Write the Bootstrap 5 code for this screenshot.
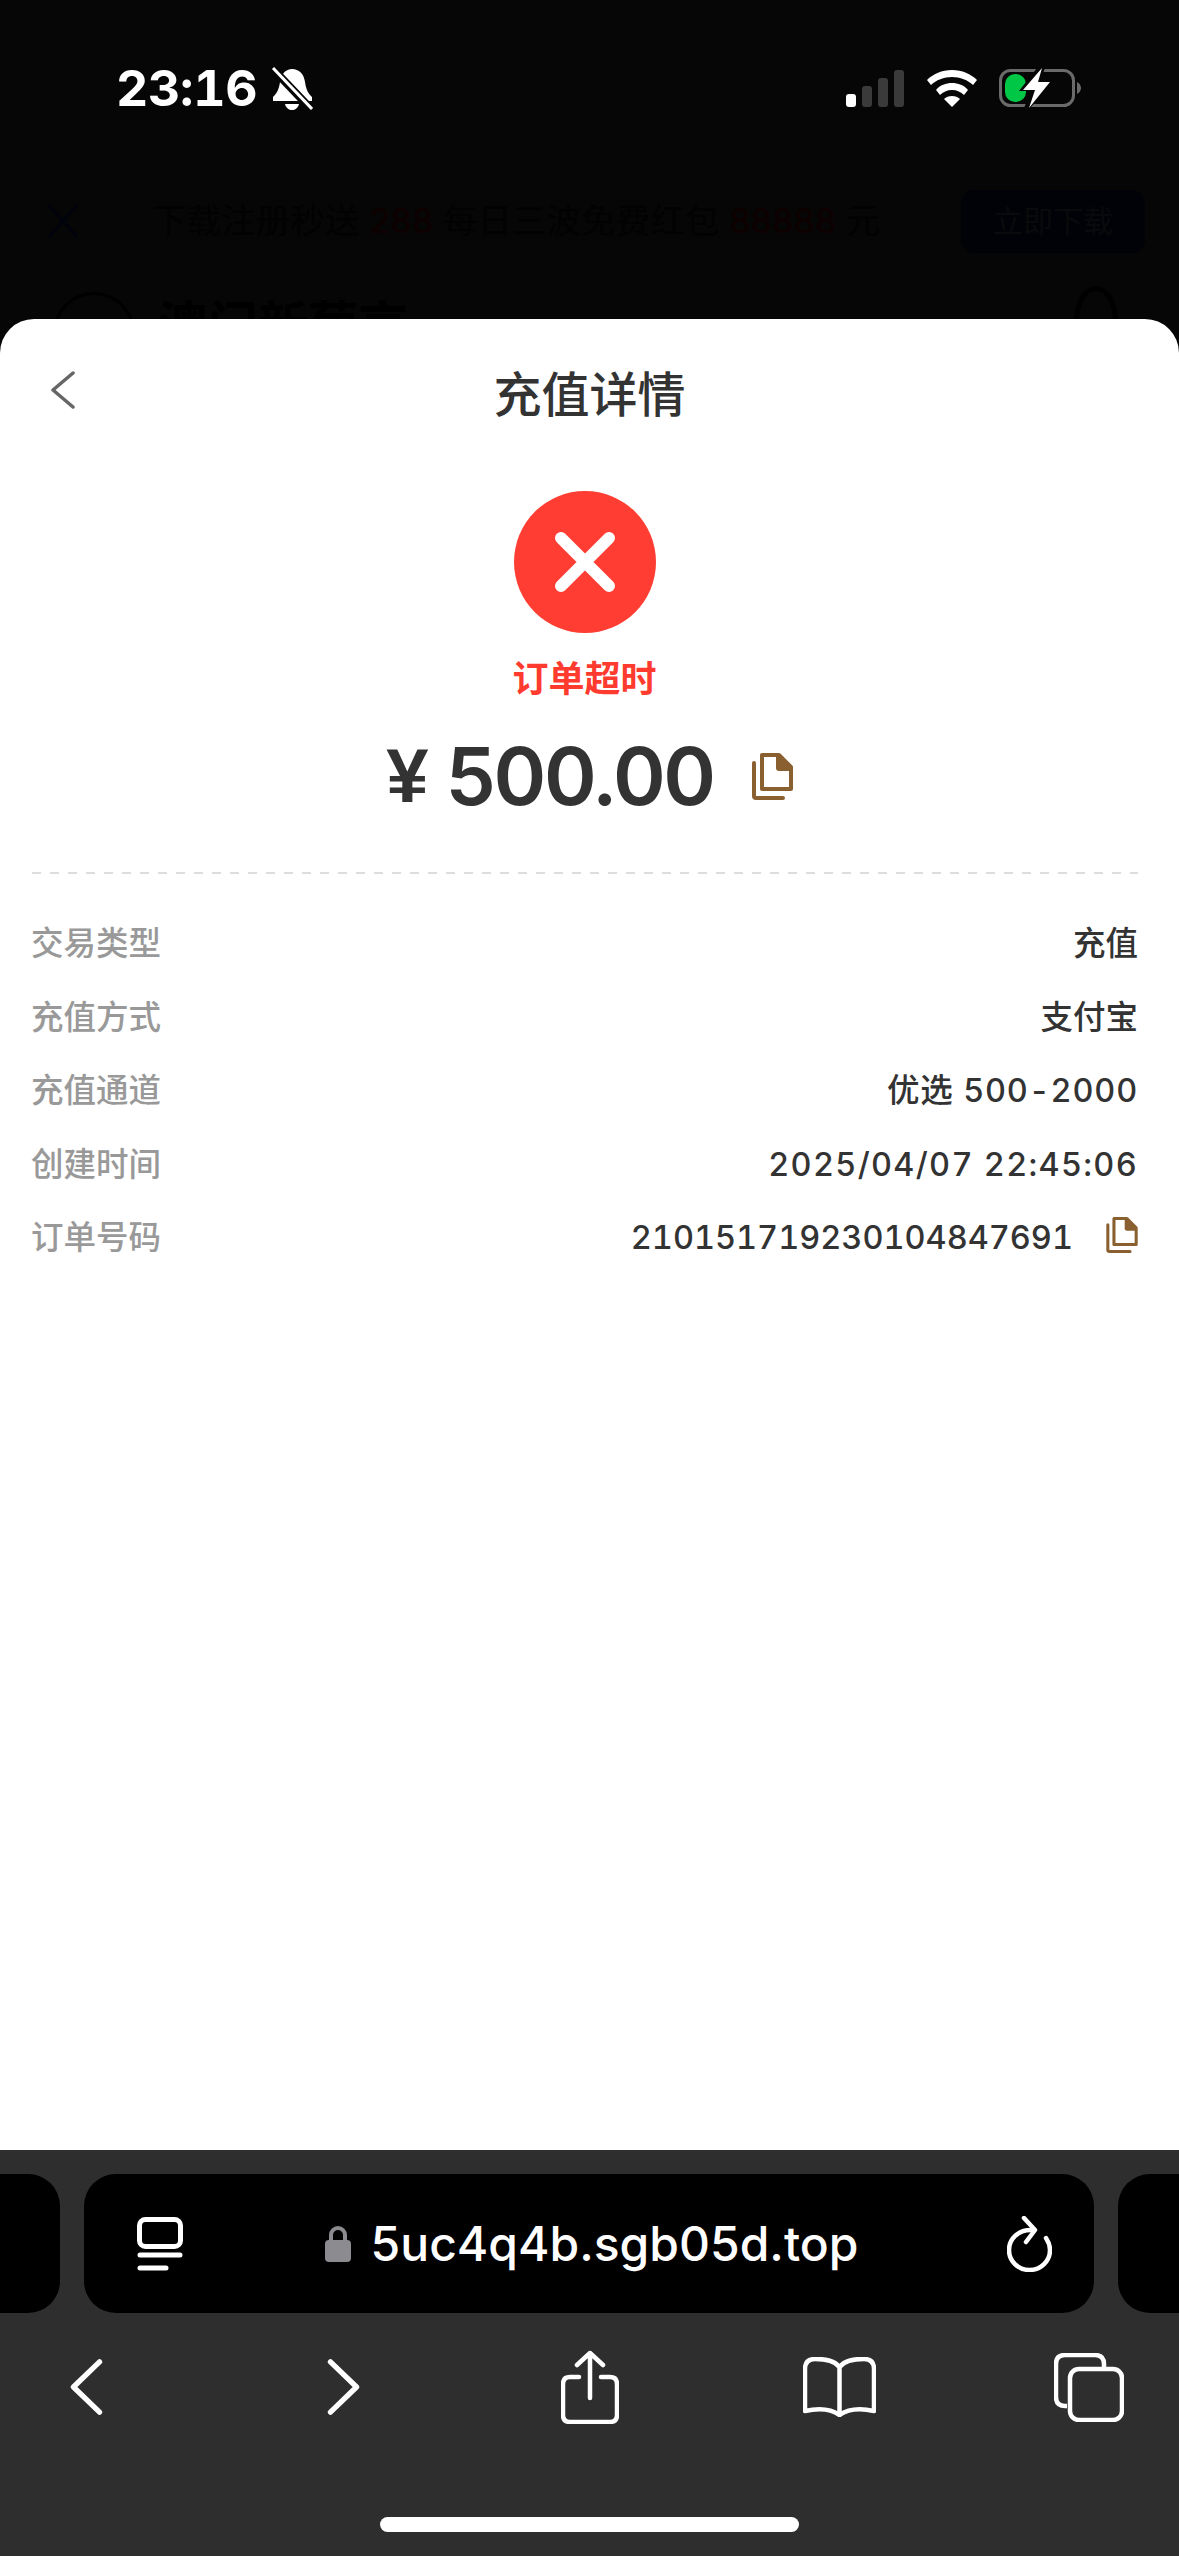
<!DOCTYPE html>
<html lang="zh-CN">
<head>
<meta charset="UTF-8">
<meta name="viewport" content="width=device-width, initial-scale=1.0">
<title>充值详情</title>
<link href="https://cdn.jsdelivr.net/npm/bootstrap@5.3.0/dist/css/bootstrap.min.css" rel="stylesheet">
<style>
html, body { height: 100%; }
body { background: #060606; font-family: Inter, "Noto Sans CJK SC", sans-serif; overflow: hidden; }
.screen { width: 1179px; height: 2556px; }
.behind { height: 319px; overflow: hidden; flex: none; }
.status-row { height: 62px; margin-top: 57px; padding: 0 98px 0 116px; color: #fff; }
.clock { font-size: 50px; font-weight: 700; line-height: 1; letter-spacing: -.3px; font-variant-numeric: tabular-nums; }
.bell { width: 42px; height: 43px; margin-left: 14px; }
.sig { width: 58px; height: 37px; margin-right: 23px; }
.wifi { width: 50px; height: 37px; margin-right: 22px; }
.batt { width: 82px; height: 40px; }
.dim-banner { height: 64px; margin-top: 70px; padding: 0 34px 0 48px; color: #020202; font-size: 34.6px; }
.dim-x { width: 30px; height: 34px; margin-right: 74px; }
.dim-red { color: #0e0000; }
.dim-btn { width: 184px; height: 63px; background: #000207; border-radius: 14px; font-size: 30px; color: #090a0c; }
.dim-head { padding: 39px 61px 0 53px; }
.dim-logo { width: 82px; height: 82px; border: 3px solid #000; border-radius: 50%; margin-right: 23px; }
.dim-name { font-size: 50px; font-weight: 700; color: #000; line-height: 1; }
.dim-user { width: 44px; height: 70px; border: 5px solid #000; border-radius: 50%; margin-top: -6px; }
.sheet { background: #fff; border-radius: 34px 34px 0 0; height: 1831px; flex: none; padding: 0 41px 0 31px; }
.sheet-top { height: 105px; padding-top: 47px; }
.back-arrow { width: 26px; height: 38px; position: absolute; left: 50px; top: 52px; }
.sheet-title { font-size: 48px; font-weight: 500; color: #333; line-height: 58px; text-align: center; margin-right: -10px; }
.fail-dot { width: 142px; height: 142px; background: #ff3d32; border-radius: 50%; margin-top: 67px; }
.fail-dot svg { width: 60px; height: 60px; }
.fail-text { font-size: 36px; font-weight: 700; color: #ff3b30; line-height: 44px; margin-top: 24px; }
.amount-line { margin: 35px 0 0 10px; height: 80px; color: #333; }
.yen { font-family: "Liberation Sans", sans-serif; font-size: 76px; font-weight: 700; line-height: 1; margin-right: 17px; }
.amount-num { font-size: 80px; font-weight: 600; line-height: 1; letter-spacing: -2.400px; }
.copy-big { width: 41px; height: 47px; margin-left: 38px; }
.copy-small { width: 32px; height: 36px; margin-left: 33px; margin-top: -8px; }
.dash-line { height: 2px; margin: 56px 0 0 1px; background: repeating-linear-gradient(90deg, #ddd 0 9px, transparent 9px 18px); }
.info-list { margin-top: 34px; }
.info-row { height: 73.5px; font-size: 32.5px; font-weight: 500; }
.info-key { color: #999; }
.info-val { color: #333; font-variant-numeric: tabular-nums; }
.ls-chan { letter-spacing: .8px; }
.ls-date { letter-spacing: 1.3px; }
.toolbar { background: #2e2e2e; flex: 1; }
.tabs-row { height: 139px; margin-top: 24px; gap: 24px; }
.side-pill { width: 60px; background: #000; }
.side-l { border-radius: 0 32px 32px 0; }
.side-r { border-radius: 32px 0 0 32px; flex: 1; }
.url-pill { width: 1010px; background: #000; border-radius: 32px; padding: 0 42px 0 53px; color: #fff; }
.reader { width: 46px; height: 54px; }
.url-mid { padding-right: 7px; }
.lock-ico { width: 26px; height: 37px; margin-right: 20px; }
.url-text { font-size: 48px; font-weight: 500; line-height: 1; }
.reload { width: 45px; height: 56px; }
.nav-row { height: 148px; }
.nav-row svg { display: block; flex: none; }
.nb-back { margin-left: 69px; }
.nb-fwd { margin-left: 224px; }
.nb-share { margin-left: 200px; }
.nb-book { margin-left: 184px; }
.nb-tabs { margin-left: 178px; }
.home-bar { width: 419px; height: 15px; background: #fff; border-radius: 8px; margin: 56px auto 0; }
</style>
</head>
<body>
<div class="screen d-flex flex-column">

  <div class="behind">
    <div class="status-row d-flex align-items-center">
      <span class="clock">23:16</span>
      <svg class="bell" viewBox="0 0 42 43">
        <path fill="#fff" d="M21 2c7 0 12 5 13 13 1 6 2 10 7 15v4H2v-4c5-5 6-9 7-15 1-8 6-13 12-13z"/>
        <path fill="#fff" d="M14 37h14c-1 4-4 6-7 6s-6-2-7-6z"/>
        <path stroke="#060606" stroke-width="8" d="M1 1l40 42"/>
        <path stroke="#fff" stroke-width="3" d="M2 1l39 41"/>
      </svg>
      <div class="ms-auto d-flex align-items-center">
        <svg class="sig" viewBox="0 0 58 37">
          <rect x="0" y="24" width="10" height="13" rx="3" fill="#fff"/>
          <rect x="16" y="16" width="10" height="21" rx="3" fill="#3a3a3a"/>
          <rect x="32" y="8" width="10" height="29" rx="3" fill="#3a3a3a"/>
          <rect x="48" y="0" width="10" height="37" rx="3" fill="#3a3a3a"/>
        </svg>
        <svg class="wifi" viewBox="0 0 50 37">
          <path fill="#fff" d="M25 0c10 0 19 4 25 10l-4 5C41 10 33 7 25 7S9 10 4 15L0 10C6 4 15 0 25 0z"/>
          <path fill="#fff" d="M25 13c6 0 12 2 16 7l-4 5c-3-3-7-5-12-5s-9 2-12 5l-4-5c4-5 10-7 16-7z"/>
          <path fill="#fff" d="M25 26c3 0 6 1 8 3l-8 8-8-8c2-2 5-3 8-3z"/>
        </svg>
        <svg class="batt" viewBox="0 0 82 40">
          <rect x="1.500" y="2.500" width="73" height="35" rx="10" fill="none" stroke="#6a6a6a" stroke-width="3"/>
          <path fill="#6a6a6a" d="M78 14c2 1 4 3 4 6s-2 5-4 6z"/>
          <rect x="6" y="6" width="21" height="28" rx="10" fill="#00c746"/>
          <path fill="#060606" d="M38 0L20 23h12l-7 17 6 0 24-26H41l5-14z"/>
          <path fill="#fff" d="M43 0L24 22h12l-6 18 21-26H39z"/>
        </svg>
      </div>
    </div>
    <div class="dim-banner d-flex align-items-center">
      <svg class="dim-x" viewBox="0 0 30 34"><path d="M1 1l28 32M29 1L1 33" stroke="#00020c" stroke-width="3"/></svg>
      <span>下载注册秒送 <span class="dim-red">288</span> 每日三波免费红包 <span class="dim-red">88888</span> 元</span>
      <div class="dim-btn ms-auto d-flex align-items-center justify-content-center">立即下载</div>
    </div>
    <div class="dim-head d-flex">
      <div class="dim-logo"></div>
      <div class="dim-name pt-2">澳门新葡京</div>
      <div class="dim-user ms-auto"></div>
    </div>
  </div>

  <div class="sheet position-relative">
    <div class="sheet-top">
      <svg class="back-arrow" viewBox="0 0 26 38"><path d="M23 2L3 19l20 17" fill="none" stroke="#666" stroke-width="3.500" stroke-linecap="round" stroke-linejoin="round"/></svg>
      <div class="sheet-title">充值详情</div>
    </div>
    <div class="d-flex flex-column align-items-center">
      <div class="fail-dot d-flex align-items-center justify-content-center">
        <svg viewBox="0 0 60 60"><path d="M6 6l48 48M54 6L6 54" stroke="#fff" stroke-width="12" stroke-linecap="round"/></svg>
      </div>
      <div class="fail-text">订单超时</div>
      <div class="amount-line d-flex align-items-center">
        <span class="yen">¥</span>
        <span class="amount-num">500.00</span>
        <svg class="copy-big" viewBox="0 0 41 47">
          <path d="M10 2h17l12 12v22H10z" fill="none" stroke="#8a6030" stroke-width="4" stroke-linejoin="round"/>
          <path d="M24 2h3l12 12v4H27q-3 0-3-3z" fill="#8a6030"/>
          <path d="M2 10v33q0 2 2 2h27" fill="none" stroke="#8a6030" stroke-width="4" stroke-linecap="round"/>
        </svg>
      </div>
    </div>
    <div class="dash-line"></div>
    <div class="info-list">
      <div class="info-row d-flex justify-content-between align-items-center">
        <span class="info-key">交易类型</span><span class="info-val">充值</span>
      </div>
      <div class="info-row d-flex justify-content-between align-items-center">
        <span class="info-key">充值方式</span><span class="info-val">支付宝</span>
      </div>
      <div class="info-row d-flex justify-content-between align-items-center">
        <span class="info-key">充值通道</span><span class="info-val ls-chan">优选 500-2000</span>
      </div>
      <div class="info-row d-flex justify-content-between align-items-center">
        <span class="info-key">创建时间</span><span class="info-val ls-date">2025/04/07 22:45:06</span>
      </div>
      <div class="info-row d-flex justify-content-between align-items-center">
        <span class="info-key">订单号码</span>
        <span class="d-flex align-items-center">
          <span class="info-val">210151719230104847691</span>
          <svg class="copy-small" viewBox="0 0 41 47">
            <path d="M10 2h17l12 12v22H10z" fill="none" stroke="#8a6030" stroke-width="4" stroke-linejoin="round"/>
            <path d="M24 2h3l12 12v4H27q-3 0-3-3z" fill="#8a6030"/>
            <path d="M2 10v33q0 2 2 2h27" fill="none" stroke="#8a6030" stroke-width="4" stroke-linecap="round"/>
          </svg>
        </span>
      </div>
    </div>
  </div>

  <div class="toolbar">
    <div class="tabs-row d-flex">
      <div class="side-pill side-l"></div>
      <div class="url-pill d-flex align-items-center">
        <svg class="reader" viewBox="0 0 46 54" fill="none" stroke="#fff" stroke-width="5" stroke-linecap="round">
          <rect x="2.500" y="2.500" width="41" height="27" rx="6"/>
          <path d="M3 38h40M3 51h26"/>
        </svg>
        <div class="d-flex align-items-center justify-content-center flex-grow-1 url-mid">
          <svg class="lock-ico" viewBox="0 0 26 37">
            <path d="M6 17V10a7 7 0 0 1 14 0v7" fill="none" stroke="#8c8c90" stroke-width="4"/>
            <rect x="0" y="15" width="26" height="22" rx="4" fill="#8c8c90"/>
          </svg>
          <span class="url-text">5uc4q4b.sgb05d.top</span>
        </div>
        <svg class="reload" viewBox="0 0 45 56" fill="none" stroke="#fff" stroke-width="4.500" stroke-linecap="round" stroke-linejoin="round">
          <path d="M24 14C11 14 2 23 2 34s9 20 20.500 20S43 45 43 34c0-5-2-9-4-12"/>
          <path d="M17 2l11 12-9 12"/>
        </svg>
      </div>
      <div class="side-pill side-r"></div>
    </div>
    <div class="nav-row d-flex align-items-center">
      <svg class="nb-back" width="34" height="56" viewBox="0 0 34 58"><path d="M31 3L4 29l27 26" fill="none" stroke="#fff" stroke-width="5.500" stroke-linecap="round" stroke-linejoin="round"/></svg>
      <svg class="nb-fwd" width="34" height="56" viewBox="0 0 34 58"><path d="M3 3l27 26L3 55" fill="none" stroke="#fff" stroke-width="5.500" stroke-linecap="round" stroke-linejoin="round"/></svg>
      <svg class="nb-share" width="58" height="74" viewBox="0 0 58 74" fill="none" stroke="#fff" stroke-width="4.500" stroke-linecap="round" stroke-linejoin="round">
        <path d="M18 27H9q-7 0-7 7v31q0 7 7 7h40q7 0 7-7V34q0-7-7-7h-9"/>
        <path d="M29 48V3M16 15L29 3l13 12"/>
      </svg>
      <svg class="nb-book" width="73" height="60" viewBox="0 0 73 60" fill="none" stroke="#fff" stroke-width="4.500" stroke-linecap="round" stroke-linejoin="round">
        <path d="M36.500 10C31 3 22 2 12 2Q2 2 2 12v42c14-3 26-2 34.500 4"/>
        <path d="M36.500 10C42 3 51 2 61 2q10 0 10 10v42c-14-3-26-2-34.500 4z"/>
      </svg>
      <svg class="nb-tabs" width="70" height="69" viewBox="0 0 70 69" fill="none" stroke="#fff" stroke-width="4.500">
        <path d="M13 53H11q-9 0-9-9V11q0-9 9-9h30q9 0 9 9v3"/>
        <rect x="16" y="16" width="52" height="51" rx="9"/>
      </svg>
    </div>
    <div class="home-bar"></div>
  </div>
</div>
<script src="https://cdn.jsdelivr.net/npm/bootstrap@5.3.0/dist/js/bootstrap.bundle.min.js"></script>
</body>
</html>
